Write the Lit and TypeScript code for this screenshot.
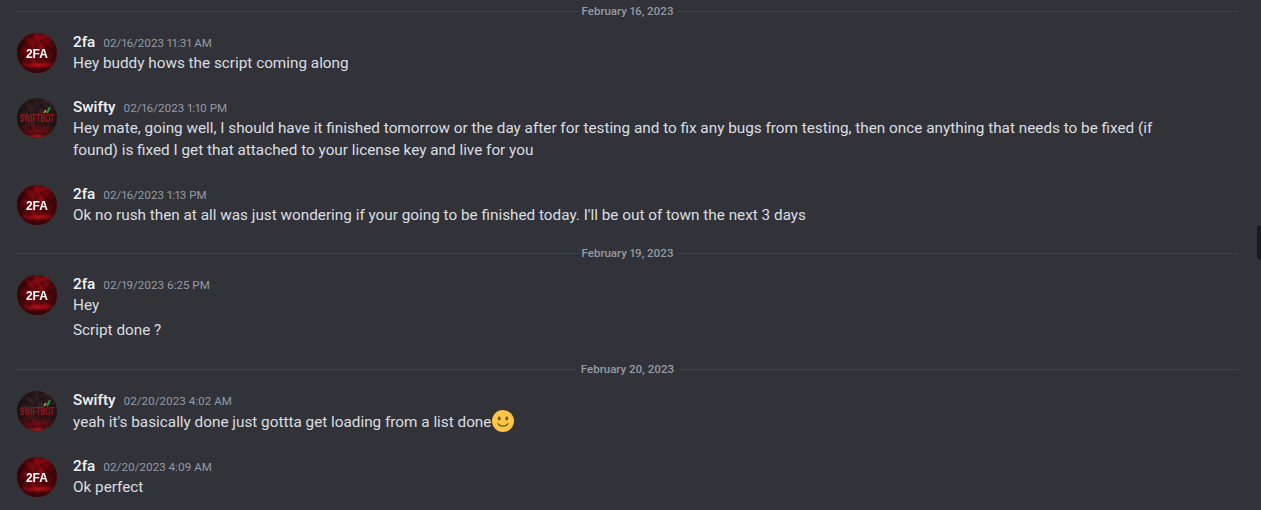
import { LitElement, html, css } from "lit";
import { customElement } from "lit/decorators.js";

type Msg = { kind: "sep"; date: string; cls: string } | { kind: "msg"; who: "2fa" | "Swifty"; time: string; lines: unknown[]; cls: string };

const smile = html`<svg class="emoji" viewBox="0 0 22 22" aria-hidden="true">
  <circle cx="11" cy="11" r="11" fill="#fbc546"/>
  <ellipse cx="7.2" cy="8.4" rx="1.4" ry="2" fill="#6e5326"/>
  <ellipse cx="14.8" cy="8.4" rx="1.4" ry="2" fill="#6e5326"/>
  <path d="M6 13.8c1.4 1.7 3.1 2.3 5 2.3s3.6-.6 5-2.3" fill="none" stroke="#6e5326" stroke-width="1.3" stroke-linecap="round"/>
</svg>`;

const texture = html`<svg class="tex" viewBox="0 0 40 40" aria-hidden="true">
  <filter id="mottle"><feTurbulence type="fractalNoise" baseFrequency="0.14" numOctaves="3" seed="7"/>
    <feColorMatrix values="0 0 0 0 0  0 0 0 0 0  0 0 0 0 0  1.9 0 0 0 -0.55"/></filter>
  <rect width="40" height="40" filter="url(#mottle)"/>
</svg>`;

const items: Msg[] = [
  { kind: "sep", date: "February 16, 2023", cls: "s1" },
  { kind: "msg", who: "2fa", time: "02/16/2023 11:31 AM", lines: ["Hey buddy hows the script coming along"], cls: "" },
  { kind: "msg", who: "Swifty", time: "02/16/2023 1:10 PM", lines: ["Hey mate, going well, I should have it finished tomorrow or the day after for testing and to fix any bugs from testing, then once anything that needs to be fixed (if found) is fixed I get that attached to your license key and live for you"], cls: "" },
  { kind: "msg", who: "2fa", time: "02/16/2023 1:13 PM", lines: ["Ok no rush then at all was just wondering if your going to be finished today. I'll be out of town the next 3 days"], cls: "" },
  { kind: "sep", date: "February 19, 2023", cls: "" },
  { kind: "msg", who: "2fa", time: "02/19/2023 6:25 PM", lines: ["Hey", "Script done ?"], cls: "" },
  { kind: "sep", date: "February 20, 2023", cls: "s3" },
  { kind: "msg", who: "Swifty", time: "02/20/2023 4:02 AM", lines: [html`yeah it's basically done just gottta get loading from a list done ${smile}`], cls: "" },
  { kind: "msg", who: "2fa", time: "02/20/2023 4:09 AM", lines: ["Ok perfect"], cls: "" },
];

@customElement("app-root")
export class AppRoot extends LitElement {
  static styles = css`
    :host { display: block; width: 1261px; height: 510px; overflow: hidden; background: #313338; position: relative;
      font-family: Roboto, "Liberation Sans", sans-serif; font-variant-numeric: proportional-nums; }
    .list { display: flex; flex-direction: column; padding: 0 22px 0 16px; }
    .sep { display: flex; align-items: center; height: 1px; margin: 26px 0 19px; background: #3f4147; justify-content: center; }
    .sep.s1 { margin-top: 11px; }
    .sep.s3 { margin-top: 27px; }
    .sep span { background: #313338; padding: 0 5px; font-size: 11.5px; font-weight: 500; line-height: 13px; color: #949ba4; }
    .msg { display: flex; gap: 16px; margin-top: 21px; margin-left: 1px; }
    .sep + .msg { margin-top: 0; }
    .avatar { position: relative; width: 40px; height: 40px; border-radius: 50%; flex: none; margin-top: 2px; display: flex; align-items: center; justify-content: center; overflow: hidden; }
    .tex { position: absolute; inset: 0; width: 40px; height: 40px; opacity: .5; }
    .a2fa { background: radial-gradient(ellipse 55% 10% at 50% 80%, #c4111b 0, transparent 100%), radial-gradient(ellipse 40% 30% at 55% 14%, #b00e16 0, transparent 100%), radial-gradient(circle at 50% 50%, #8a0b12 0, #56070c 62%, #260406 100%); }
    .a2fa span { position: relative; font-family: "Liberation Sans", sans-serif; font-weight: 700; font-size: 13px; color: #fff; transform: scaleX(.92); }
    .aswift { background: radial-gradient(ellipse 35% 7% at 50% 96%, #f01c26 0, transparent 100%), radial-gradient(ellipse 70% 28% at 45% 84%, #7c0c12 0, transparent 100%), radial-gradient(circle at 50% 25%, #3a2326 0, #2a1b1e 60%, #171214 100%); }
    .aswift span { position: relative; font-family: "Liberation Sans", sans-serif; font-weight: 700; font-size: 10px; color: #a81219; transform: scaleX(.66); white-space: nowrap; margin-top: 1px; }
    .aswift .bars { position: absolute; left: 26px; top: 8px; width: 8px; height: 8px; }
    .body { flex: 1; min-width: 0; padding-bottom: 1px; }
    .head { display: flex; align-items: baseline; height: 21px; line-height: 22px; }
    .name { font-size: 15.3px; font-weight: 500; color: #f2f3f5; }
    .time { font-size: 11.6px; color: #949ba4; margin-left: 8px; }
    .line { font-size: 15.3px; line-height: 22px; color: #dbdee1; max-width: 1090px; }
    .line + .line { margin-top: 3px; }
    .emoji { width: 22px; height: 22px; vertical-align: -5px; margin-left: -3px; }
    .thumb { position: absolute; right: 0; top: 225px; width: 4px; height: 35px; background: #1a1b1e; border-radius: 4px 0 0 4px; }
  `;
  private avatar(who: string) {
    return who === "2fa"
      ? html`<div class="avatar a2fa">${texture}<span>2FA</span></div>`
      : html`<div class="avatar aswift">${texture}<span>SWIFTBOT</span><svg class="bars" viewBox="0 0 8 8"><path d="M1 7 3 4" stroke="#c9a11c" stroke-width="1.5"/><path d="M4 7 7 1" stroke="#1f9a3c" stroke-width="1.8"/></svg></div>`;
  }
  render() {
    return html`<div class="list">
      ${items.map((m) => m.kind === "sep"
        ? html`<div class="sep ${m.cls}"><span>${m.date}</span></div>`
        : html`<div class="msg ${m.cls}">${this.avatar(m.who)}<div class="body">
            <div class="head"><span class="name">${m.who}</span><span class="time">${m.time}</span></div>
            ${m.lines.map((l) => html`<div class="line">${l}</div>`)}
          </div></div>`)}
    </div><div class="thumb"></div>`;
  }
}
